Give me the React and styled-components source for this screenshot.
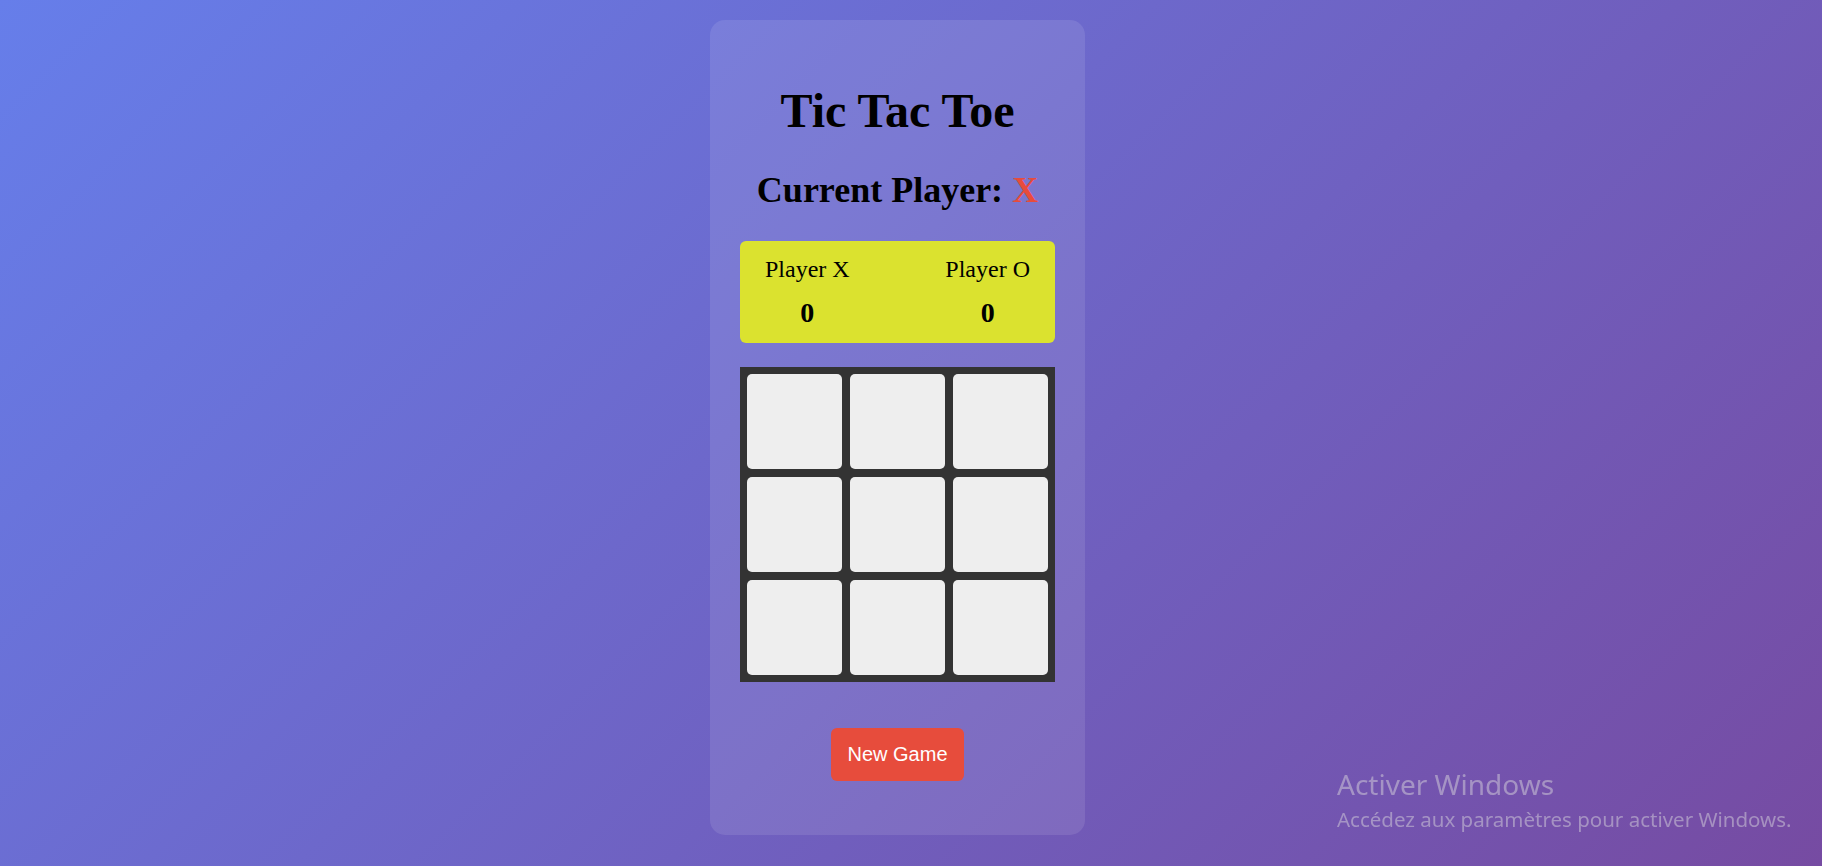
import styled, { createGlobalStyle } from "styled-components"

const GlobalStyle = createGlobalStyle`
    html, body {
        margin: 0;
        padding: 0;
    }
    body {
        font-family: "Liberation Serif", "Times New Roman", serif;
        min-height: 100vh;
        background: linear-gradient(135deg, #667eea 0%, #764ba2 100%);
    }
`

const Page = styled.div`
    min-height: 100vh;
    display: flex;
    justify-content: center;
    align-items: flex-start;
    padding: 20px 27px 0 0;
    box-sizing: border-box;
`
const Card = styled.div`
    width: 375px;
    height: 815px;
    box-sizing: border-box;
    padding: 30px;
    background: rgba(255, 255, 255, 0.1);
    border-radius: 15px;
    display: flex;
    flex-direction: column;
    align-items: center;
`
const Title = styled.h1`
    margin: 33px 0 0;
    font-size: 48px;
    line-height: 56px;
    font-weight: 700;
    color: #000;
`
const Status = styled.h2`
    margin: 31px 0 0;
    font-size: 36px;
    line-height: 40px;
    font-weight: 700;
    color: #000;
`
const Mark = styled.span`
    color: #e74c3c;
`
const ScoreBoard = styled.div`
    margin-top: 31px;
    width: 100%;
    box-sizing: border-box;
    padding: 15px 25px;
    background: #dbe22f;
    border-radius: 6px;
    display: flex;
    justify-content: space-between;
`
const ScoreCol = styled.div`
    display: flex;
    flex-direction: column;
    align-items: center;
`
const ScoreLabel = styled.div`
    font-size: 24px;
    line-height: 27px;
`
const ScoreValue = styled.div`
    margin-top: 14px;
    font-size: 28px;
    line-height: 31px;
    font-weight: 700;
`
const Board = styled.div`
    margin-top: 24px;
    width: 100%;
    box-sizing: border-box;
    padding: 7px;
    background: #333;
    display: grid;
    grid-template-columns: repeat(3, 95px);
    grid-auto-rows: 95px;
    gap: 8px;
`
const Cell = styled.button`
    border: none;
    padding: 0;
    background: #eee;
    border-radius: 5px;
    cursor: pointer;
    font-family: inherit;
    font-size: 48px;
    font-weight: 700;
    color: ${(p) => (p.$value === "X" ? "#e74c3c" : "#3498db")};
`
const NewGame = styled.button`
    margin-top: 46px;
    padding: 15px 16px;
    border: none;
    border-radius: 6px;
    background: #e74c3c;
    color: #fff;
    font-family: "Liberation Sans", Arial, sans-serif;
    font-size: 20px;
    line-height: 23px;
    cursor: pointer;
`
const Watermark = styled.div`
    position: fixed;
    left: 1337px;
    top: 766px;
    font-family: "Noto Sans", "Open Sans", sans-serif;
    color: rgba(205, 200, 215, 0.55);
    pointer-events: none;
    white-space: nowrap;
`
const WatermarkTitle = styled.div`
    font-size: 28px;
    line-height: 36px;
`
const WatermarkText = styled.div`
    margin-top: 5px;
    font-size: 20.5px;
    line-height: 25px;
`

const cells = Array(9).fill(null)

const App = () => {
    return (
        <>
            <GlobalStyle />
            <Page>
                <Card>
                    <Title>Tic Tac Toe</Title>
                    <Status>
                        Current Player: <Mark>X</Mark>
                    </Status>
                    <ScoreBoard>
                        <ScoreCol>
                            <ScoreLabel>Player X</ScoreLabel>
                            <ScoreValue>0</ScoreValue>
                        </ScoreCol>
                        <ScoreCol>
                            <ScoreLabel>Player O</ScoreLabel>
                            <ScoreValue>0</ScoreValue>
                        </ScoreCol>
                    </ScoreBoard>
                    <Board>
                        {cells.map((value, index) => (
                            <Cell key={index} $value={value}>
                                {value}
                            </Cell>
                        ))}
                    </Board>
                    <NewGame>New Game</NewGame>
                </Card>
            </Page>
            <Watermark>
                <WatermarkTitle>Activer Windows</WatermarkTitle>
                <WatermarkText>Accédez aux paramètres pour activer Windows.</WatermarkText>
            </Watermark>
        </>
    )
}

export default App
